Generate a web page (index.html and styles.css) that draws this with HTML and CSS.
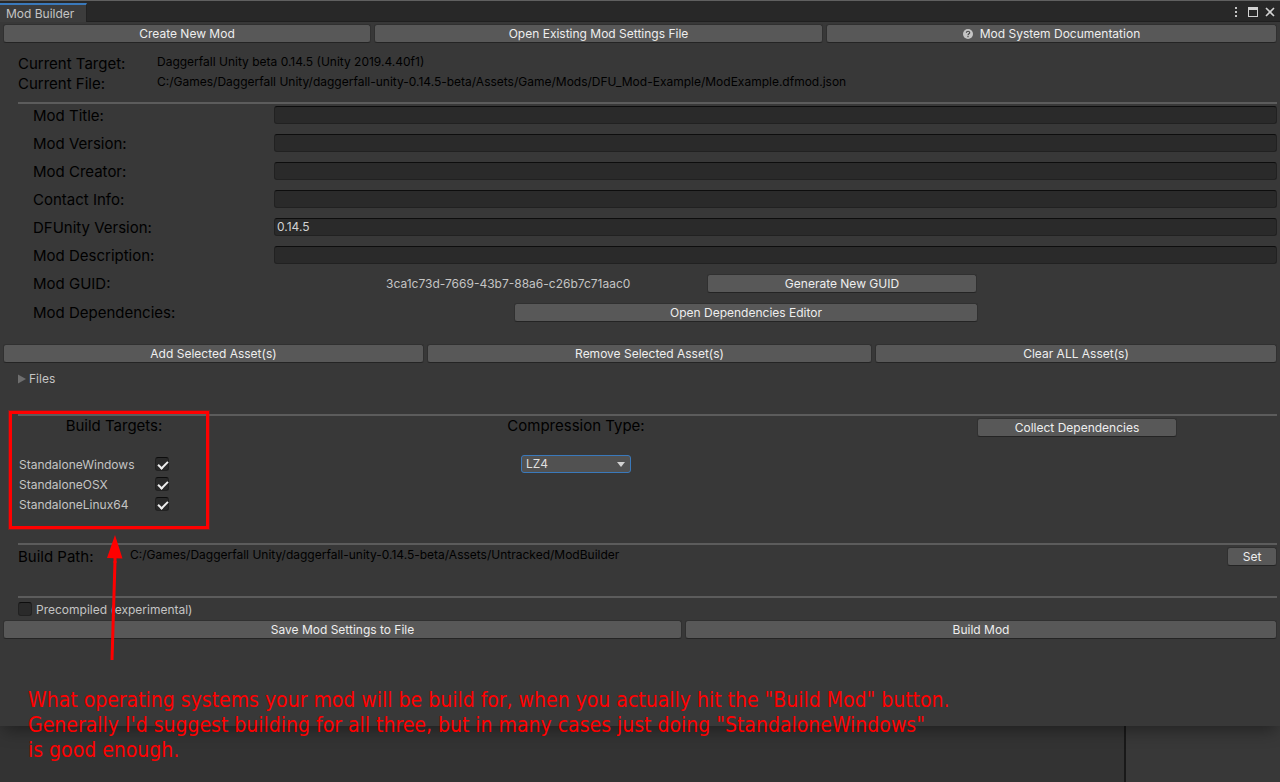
FILE: index.html
```html
<!DOCTYPE html>
<html lang="en">
<head>
    <meta charset="UTF-8">
    <meta name="viewport" content="width=device-width, initial-scale=1.0">
    <title>Mod Builder</title>
    <link rel="stylesheet" href="styles.css">
</head>
<body>
    <main class="window">
        <header class="tab-bar">
            <h1 class="tab">Mod Builder</h1>
            <div class="window-controls">
                <button class="icon-btn" aria-label="Menu">
                    <svg width="10" height="12" viewBox="0 0 10 12"><path d="M4 1h2v2H4zM4 5h2v2H4zM4 9h2v2H4z" fill="#c4c4c4"/></svg>
                </button>
                <button class="icon-btn" aria-label="Maximize">
                    <svg width="10" height="12" viewBox="0 0 10 12"><path d="M0 1h10v10H0zM1 4v6h8V4z" fill="#d2d2d2" fill-rule="evenodd"/></svg>
                </button>
                <button class="icon-btn" aria-label="Close">
                    <svg width="10" height="12" viewBox="0 0 10 12"><path d="M1 2l8 8M9 2l-8 8" stroke="#d2d2d2" stroke-width="1.6"/></svg>
                </button>
            </div>
        </header>

        <div class="button-row file-actions">
            <button class="btn">Create New Mod</button>
            <button class="btn">Open Existing Mod Settings File</button>
            <button class="btn">
                <svg class="help-icon" width="10" height="10" viewBox="0 0 10 10"><circle cx="5" cy="5" r="5" fill="#c4c4c4"/><path d="M3.4 3.8C3.4 1.7 6.7 1.8 6.7 3.7C6.7 4.8 5 4.8 5 6.2M5 7.1v1.2" fill="none" stroke="#4a4a4a" stroke-width="1.2"/></svg>
                Mod System Documentation
            </button>
        </div>

        <dl class="current">
            <dt>Current Target:</dt>
            <dd>Daggerfall Unity beta 0.14.5 (Unity 2019.4.40f1)</dd>
            <dt>Current File:</dt>
            <dd>C:/Games/Daggerfall Unity/daggerfall-unity-0.14.5-beta/Assets/Game/Mods/DFU_Mod-Example/ModExample.dfmod.json</dd>
        </dl>

        <section class="fields">
            <div class="field">
                <label for="title">Mod Title:</label>
                <input type="text" id="title">
            </div>
            <div class="field">
                <label for="version">Mod Version:</label>
                <input type="text" id="version">
            </div>
            <div class="field">
                <label for="creator">Mod Creator:</label>
                <input type="text" id="creator">
            </div>
            <div class="field">
                <label for="contact">Contact Info:</label>
                <input type="text" id="contact">
            </div>
            <div class="field">
                <label for="dfunity">DFUnity Version:</label>
                <input type="text" id="dfunity" value="0.14.5">
            </div>
            <div class="field">
                <label for="description">Mod Description:</label>
                <input type="text" id="description">
            </div>
            <div class="field guid-row">
                <span>Mod GUID:</span>
                <span class="guid">3ca1c73d-7669-43b7-88a6-c26b7c71aac0</span>
                <button class="btn">Generate New GUID</button>
            </div>
            <div class="field dependencies-row">
                <span>Mod Dependencies:</span>
                <button class="btn">Open Dependencies Editor</button>
            </div>
        </section>

        <div class="button-row asset-actions">
            <button class="btn">Add Selected Asset(s)</button>
            <button class="btn">Remove Selected Asset(s)</button>
            <button class="btn">Clear ALL Asset(s)</button>
        </div>

        <button class="foldout">
            <svg width="8" height="10" viewBox="0 0 8 10"><path d="M0 0.5L8 5L0 9.5z" fill="#6e6e6e"/></svg>
            Files
        </button>

        <section class="build">
            <div class="targets">
                <h2>Build Targets:</h2>
                <div class="target">
                    <label for="windows">StandaloneWindows</label>
                    <input type="checkbox" id="windows" checked>
                </div>
                <div class="target">
                    <label for="osx">StandaloneOSX</label>
                    <input type="checkbox" id="osx" checked>
                </div>
                <div class="target">
                    <label for="linux">StandaloneLinux64</label>
                    <input type="checkbox" id="linux" checked>
                </div>

                <!-- Highlight box and the arrow pointing to it -->
                <div class="highlight"></div>
                <svg class="arrow" width="16" height="126" viewBox="0 0 16 126">
                    <path d="M8 26L5 125" stroke="#ff0000" stroke-width="3"/>
                    <path d="M8 0L15.5 23.5L0 23z" fill="#ff0000"/>
                    <path d="M8 22L8 28" stroke="#ff0000" stroke-width="3"/>
                </svg>
            </div>
            <div class="compression">
                <h2><label for="compression">Compression Type:</label></h2>
                <div class="select-wrap">
                    <select id="compression">
                        <option>LZ4</option>
                        <option>LZMA</option>
                        <option>Uncompressed</option>
                    </select>
                    <svg class="caret" width="8" height="5" viewBox="0 0 8 5"><path d="M0 0h8L4 5z" fill="#d2d2d2"/></svg>
                </div>
            </div>
            <button class="btn collect">Collect Dependencies</button>
        </section>

        <section class="build-path">
            <h2>Build Path:</h2>
            <p>C:/Games/Daggerfall Unity/daggerfall-unity-0.14.5-beta/Assets/Untracked/ModBuilder</p>
            <button class="btn">Set</button>
        </section>

        <section class="precompiled">
            <input type="checkbox" id="precompiled">
            <label for="precompiled">Precompiled (experimental)</label>
        </section>

        <div class="button-row build-actions">
            <button class="btn">Save Mod Settings to File</button>
            <button class="btn">Build Mod</button>
        </div>

        <p class="note">
            What operating systems your mod will be build for, when you actually hit the "Build Mod" button.<br>
            Generally I'd suggest building for all three, but in many cases just doing "StandaloneWindows"<br>
            is good enough.
        </p>
    </main>

    <div class="backdrop">
        <div class="pane"></div>
        <div class="pane side"></div>
    </div>
</body>
</html>
```
FILE: styles.css
```css
* {
    margin: 0;
    padding: 0;
    box-sizing: border-box;
}

body {
    font-family: Inter, "Liberation Sans", sans-serif;
    font-size: 12px;
    line-height: 16px;
    color: #c4c4c4;
    background: #333;
    min-height: 100vh;
    display: flex;
    flex-direction: column;
    overflow-x: hidden;
}

button,
input,
select {
    font: inherit;
    color: inherit;
}

.window {
    position: relative;
    z-index: 1;
    background: #383838;
    border-top: 1px solid #606060;
    padding-bottom: 87px;
    box-shadow: 0 8px 16px -4px rgba(0, 0, 0, 0.4);
}

/* Tab bar */
.tab-bar {
    display: flex;
    justify-content: space-between;
    height: 21px;
    background: #282828;
    border-bottom: 1px solid #202020;
    padding-top: 2px;
}

.tab {
    font-size: 12px;
    font-weight: 400;
    line-height: 18px;
    height: 19px;
    padding: 0 12px 0 6px;
    background: #3c3c3c;
    border-top: 2px solid #3a79bb;
    border-right: 1px solid #222;
}

.window-controls {
    display: flex;
    align-items: center;
    gap: 7px;
    padding-right: 5px;
}

.icon-btn {
    display: flex;
    background: none;
    border: none;
}

/* Buttons */
.btn {
    display: flex;
    align-items: center;
    justify-content: center;
    height: 19px;
    background: #585858;
    border: 1px solid #303030;
    border-bottom-color: #242424;
    border-radius: 3px;
    color: #eee;
    white-space: nowrap;
}

.btn:hover {
    background: #676767;
}

.help-icon {
    margin-right: 7px;
}

.button-row {
    display: grid;
    gap: 3px;
    padding: 0 3px;
}

.file-actions {
    grid-template-columns: 368fr 449fr 451fr;
    margin-top: 2px;
}

.asset-actions {
    grid-template-columns: 421fr 445fr 402fr;
    margin-top: 21px;
}

.build-actions {
    grid-template-columns: 679fr 592fr;
}

/* Current target and file */
.current {
    display: grid;
    grid-template-columns: 139px 1fr;
    grid-auto-rows: 20px;
    margin: 11px 3px 0 18px;
    padding-bottom: 8px;
    border-bottom: 2px solid #5c5c5c;
    color: #000;
}

.current dt,
.field,
h2 {
    font-size: 15px;
    font-weight: 400;
    line-height: 20px;
    color: #000;
}

/* Mod settings */
.fields {
    display: grid;
    gap: 8px;
    padding: 2px 3px 0 33px;
}

.field {
    display: grid;
    grid-template-columns: 241px 1fr;
    height: 20px;
}

.field input {
    width: 100%;
    height: 18px;
    padding: 0 2px;
    font-size: 12px;
    color: #d2d2d2;
    background: #2a2a2a;
    border: 1px solid #212121;
    border-top-color: #0d0d0d;
    border-radius: 3px;
}

.field .btn {
    font-size: 12px;
}

.field.guid-row {
    grid-template-columns: 353fr 321fr 270fr 300fr;
}

.guid {
    font-size: 12px;
    color: #c4c4c4;
}

.field.dependencies-row {
    grid-template-columns: 481fr 464fr 299fr;
    margin-top: 1px;
}

.foldout {
    display: flex;
    align-items: center;
    gap: 3px;
    height: 20px;
    margin: 6px 0 0 18px;
    background: none;
    border: none;
}

/* Build settings */
.build {
    display: grid;
    grid-template-columns: 192fr 732fr 270fr 65fr;
    margin: 25px 3px 0 18px;
    padding-bottom: 28px;
    border-top: 2px solid #5c5c5c;
    border-bottom: 2px solid #5c5c5c;
}

.targets {
    position: relative;
}

.build h2 {
    text-align: center;
    margin-bottom: 19px;
}

.target {
    display: flex;
    height: 20px;
    line-height: 20px;
    padding-left: 1px;
}

.target label {
    width: 136px;
}

input[type="checkbox"] {
    appearance: none;
    width: 14px;
    height: 14px;
    margin-top: 2px;
    background: #2a2a2a;
    border: 1px solid #212121;
    border-top-color: #0d0d0d;
    border-radius: 3px;
}

input[type="checkbox"]:checked::before {
    content: '';
    display: block;
    width: 8px;
    height: 4px;
    margin: 3px 0 0 2px;
    border: solid #eee;
    border-width: 0 0 2px 2px;
    transform: rotate(-45deg);
}

.select-wrap {
    position: relative;
    width: 110px;
    margin: 0 auto;
}

.select-wrap select {
    appearance: none;
    display: block;
    width: 100%;
    height: 18px;
    padding: 0 4px;
    line-height: 16px;
    background: #515151;
    border: 1px solid #3a79bb;
    border-radius: 3px;
    color: #dfdfdf;
}

.caret {
    position: absolute;
    top: 7px;
    right: 6px;
    pointer-events: none;
}

.collect {
    width: 200px;
    margin: 2px auto 0;
}

.build-path {
    display: grid;
    grid-template-columns: 112px 1fr 50px;
    margin: 0 3px 0 18px;
    padding: 2px 0 29px;
    border-bottom: 2px solid #5c5c5c;
    color: #000;
}

.precompiled {
    display: flex;
    gap: 4px;
    height: 22px;
    line-height: 24px;
    padding: 0 18px;
}

.precompiled input[type="checkbox"] {
    margin-top: 4px;
}

/* Annotation */
.highlight {
    position: absolute;
    top: -5px;
    left: -9px;
    width: 200px;
    height: 118px;
    border: 3px solid #f00;
    box-shadow: 0 0 0 1px rgba(255, 0, 0, 0.3);
}

.arrow {
    position: absolute;
    top: 119px;
    left: 89px;
}

.note {
    position: absolute;
    left: 28px;
    bottom: -37px;
    font-family: "DejaVu Sans Condensed", "DejaVu Sans", sans-serif;
    font-size: 21px;
    line-height: 25px;
    color: #f00;
    white-space: nowrap;
}

/* Editor behind the window */
.backdrop {
    flex: 1;
    display: grid;
    grid-template-columns: 1124fr 156fr;
}

.side {
    background: #383838;
    border-left: 2px solid #191919;
}
```
